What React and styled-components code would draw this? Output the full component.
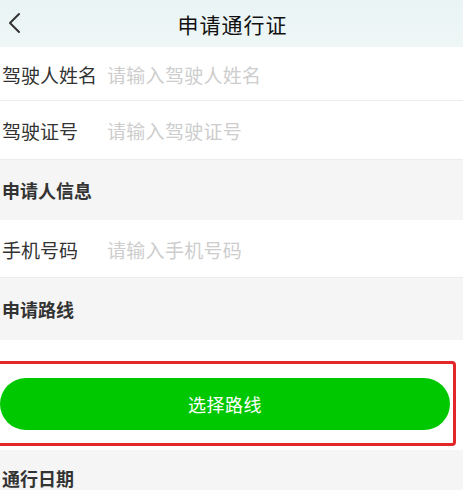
import styled, { createGlobalStyle } from "styled-components";

const GlobalStyle = createGlobalStyle`
  html, body {
    margin: 0;
    padding: 0;
    background: #f5f5f5;
    font-family: "Noto Sans CJK SC", "Noto Sans", sans-serif;
  }
`;

const Page = styled.div`
  width: 463px;
  height: 490px;
  overflow: hidden;
  background: #f5f5f5;
`;

const Header = styled.div`
  height: 47px;
  display: flex;
  align-items: center;
  justify-content: center;
  background: linear-gradient(#eaf4f4, #eef6f6);
  position: relative;
`;

const BackButton = styled.button`
  position: absolute;
  left: 6px;
  top: 11px;
  border: none;
  background: none;
  padding: 0;
  width: 18px;
  height: 24px;
  cursor: pointer;
`;

const Title = styled.h1`
  margin: 0;
  font-size: 21px;
  font-weight: 400;
  color: #111;
  letter-spacing: 1px;
  padding-left: 2px;
`;

const Row = styled.div`
  height: ${(p) => p.h || 58}px;
  display: flex;
  align-items: center;
  background: #fff;
  padding: 0 10px 0 2px;
  box-shadow: inset 0 -1px 0 #ececec;
`;

const Label = styled.span`
  width: 105px;
  flex-shrink: 0;
  font-size: 19px;
  color: #333;
`;

const Input = styled.input`
  flex: 1;
  border: none;
  outline: none;
  background: transparent;
  font-family: inherit;
  font-size: 19px;
  color: #333;
  padding: 0;
  letter-spacing: 0.3px;

  &::placeholder {
    color: #cdcdcd;
  }
`;

const Section = styled.div`
  height: ${(p) => p.h || 60}px;
  display: flex;
  align-items: center;
  padding-left: 2px;
  font-size: 18px;
  font-weight: 700;
  color: #333;
  background: #f5f5f5;
`;

const ButtonArea = styled.div`
  background: #fff;
  padding: 21px 0 4px 0;
`;

const Highlight = styled.div`
  margin-left: -4px;
  width: 460px;
  box-sizing: border-box;
  border: 3px solid #e3262a;
  border-radius: 4px;
  padding: 14px 3px 13px 1px;
`;

const GreenButton = styled.button`
  width: 100%;
  height: 52px;
  border: none;
  border-radius: 26px;
  background: #00c800;
  color: #fff;
  font-family: inherit;
  font-size: 18px;
  font-weight: 400;
  letter-spacing: 0.5px;
  cursor: pointer;
`;

export default function App() {
  return (
    <Page>
      <GlobalStyle />
      <Header>
        <BackButton aria-label="返回">
          <svg width="18" height="24" viewBox="0 0 18 24">
            <path
              d="M13 3 L4 12 L13 21"
              fill="none"
              stroke="#333"
              strokeWidth="2"
              strokeLinecap="round"
              strokeLinejoin="round"
            />
          </svg>
        </BackButton>
        <Title>申请通行证</Title>
      </Header>
      <Row h={54}>
        <Label>驾驶人姓名</Label>
        <Input placeholder="请输入驾驶人姓名" />
      </Row>
      <Row h={59}>
        <Label>驾驶证号</Label>
        <Input placeholder="请输入驾驶证号" />
      </Row>
      <Section h={60}>申请人信息</Section>
      <Row h={58}>
        <Label>手机号码</Label>
        <Input placeholder="请输入手机号码" />
      </Row>
      <Section h={62}>申请路线</Section>
      <ButtonArea>
        <Highlight>
          <GreenButton>选择路线</GreenButton>
        </Highlight>
      </ButtonArea>
      <Section h={56}>通行日期</Section>
    </Page>
  );
}
